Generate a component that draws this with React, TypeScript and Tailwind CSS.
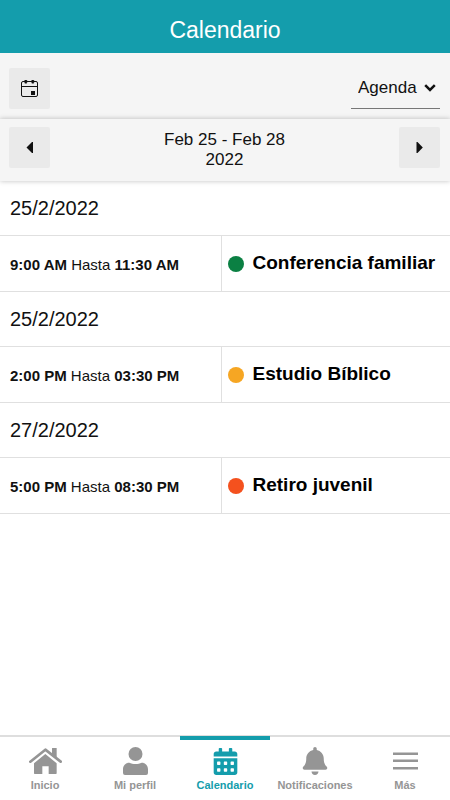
import { useState } from "react";
import { FaBell, FaCalendarAlt } from "react-icons/fa";

interface AgendaEvent {
  date: string;
  start: string;
  end: string;
  title: string;
  dot: string;
}

const EVENTS: AgendaEvent[] = [
  { date: "25/2/2022", start: "9:00 AM", end: "11:30 AM", title: "Conferencia familiar", dot: "bg-[#0b8043]" },
  { date: "25/2/2022", start: "2:00 PM", end: "03:30 PM", title: "Estudio Bíblico",      dot: "bg-[#f6a623]" },
  { date: "27/2/2022", start: "5:00 PM", end: "08:30 PM", title: "Retiro juvenil",       dot: "bg-[#f4511e]" },
];

const NAV_ITEMS = [
  { id: "inicio",         label: "Inicio",         icon: <HomeIcon /> },
  { id: "perfil",         label: "Mi perfil",      icon: <ProfileIcon /> },
  { id: "calendario",     label: "Calendario",     icon: <FaCalendarAlt size={27} /> },
  { id: "notificaciones", label: "Notificaciones", icon: <FaBell size={28} /> },
  { id: "mas",            label: "Más",            icon: <MenuIcon /> },
];

function HomeIcon() {
  return (
    <svg width="33" height="26" viewBox="0 0 99 78" fill="currentColor" aria-hidden="true">
      <path d="M4 41L49 5l46 36" fill="none" stroke="currentColor" strokeWidth="8" strokeLinecap="round" strokeLinejoin="round" />
      <path d="M70 0h13v33L69 22V1z" />
      <path d="M49 18l34 28v30q0 2-2 2H59V55H40v23H17q-2 0-2-2V46z" />
    </svg>
  );
}

function ProfileIcon() {
  return (
    <svg width="25" height="28" viewBox="0 0 75 84" fill="currentColor" aria-hidden="true">
      <circle cx="37.5" cy="21" r="21" />
      <path d="M19 47c10 5 27 5 37 0c12 0 19 9 19 20v11q0 6-6 6H6q-6 0-6-6V67c0-11 7-20 19-20z" />
    </svg>
  );
}

function MenuIcon() {
  return (
    <svg width="25" height="18" viewBox="0 0 25 18" fill="currentColor" aria-hidden="true">
      <rect y="0.5" width="25" height="2.5" />
      <rect y="7.5" width="25" height="2.5" />
      <rect y="15" width="25" height="2.5" />
    </svg>
  );
}

function TodayIcon() {
  return (
    <svg width="17" height="17" viewBox="0 0 17 17" fill="none" stroke="#111" aria-hidden="true">
      <rect x="0.5" y="1.5" width="16" height="15" rx="1.5" />
      <path d="M0.5 6.5h16" />
      <path d="M4.8 0v3.4M11.8 0v3.4" strokeWidth="2" />
      <path d="M3.3 1.5h3M10.3 1.5h3" strokeWidth="2" />
      <rect x="10" y="11" width="4" height="4" fill="#111" stroke="none" />
    </svg>
  );
}

function Arrow({ flipped = false }: { flipped?: boolean }) {
  return (
    <svg width="7" height="11" viewBox="0 0 7 11" fill="#111" aria-hidden="true">
      {flipped ? <path d="M0.5 0H1.5L6.8 5.5L1.5 11H0.5z" /> : <path d="M7 0H6L0.5 5.5L6 11H7z" />}
    </svg>
  );
}

function SquareButton({ label, children }: { label: string; children: React.ReactNode }) {
  return (
    <button type="button" aria-label={label}
      className="flex size-[41px] shrink-0 items-center justify-center rounded-xs bg-[#eaeaea]">
      {children}
    </button>
  );
}

function BottomNav() {
  const [active, setActive] = useState("calendario");

  return (
    <nav className="flex h-[65px] border-t-2 border-[#dedede] bg-white">
      {NAV_ITEMS.map(item => {
        const isActive = item.id === active;
        return (
          <a key={item.id} href={`#${item.id}`} onClick={() => setActive(item.id)}
            className={`relative flex flex-1 flex-col items-center pt-2 text-[11px] leading-4 font-bold ${isActive ? "text-[#149dac]" : "text-[#959595]"}`}>
            {isActive && <span className="absolute inset-x-0 -top-px h-1 bg-[#149dac]" />}
            <span className="flex h-8 items-center">{item.icon}</span>
            <span>{item.label}</span>
          </a>
        );
      })}
    </nav>
  );
}

export default function App() {
  const [view, setView] = useState("Agenda");

  return (
    <div className="flex min-h-screen flex-col bg-white font-['Liberation_Sans',Arial,sans-serif] text-[#111]">
      <header className="flex h-[53px] items-end justify-center bg-[#149dac] pb-2">
        <h1 className="text-[23px] leading-[30px] text-white">Calendario</h1>
      </header>

      {/* Toolbar */}
      <div className="flex h-[66px] items-center justify-between bg-[#f5f5f5] pt-1 pr-2.5 pl-[9px]">
        <SquareButton label="Hoy">
          <TodayIcon />
        </SquareButton>
        <div className="relative border-b border-[#777]">
          <select aria-label="Vista" value={view} onChange={e => setView(e.target.value)}
            className="h-10 w-[89px] appearance-none bg-transparent pl-[7px] text-[17px]">
            <option>Agenda</option>
            <option>Semana</option>
            <option>Mes</option>
          </select>
          <svg width="12" height="8" viewBox="0 0 12 8" fill="none" stroke="#111" strokeWidth="2.5"
            className="pointer-events-none absolute top-4 right-1" aria-hidden="true">
            <path d="M1.2 1.2L6 6l4.8-4.8" />
          </svg>
        </div>
      </div>

      {/* Date range */}
      <div className="relative flex h-[62px] items-start justify-between bg-[#f5f5f5] pt-2 pr-2.5 pl-[9px] shadow-[0_0_5px_rgba(0,0,0,0.25)]">
        <SquareButton label="Anterior">
          <Arrow />
        </SquareButton>
        <p className="pt-[3px] text-center text-[17px] leading-5">
          Feb 25 - Feb 28
          <br />
          2022
        </p>
        <SquareButton label="Siguiente">
          <Arrow flipped />
        </SquareButton>
      </div>

      <main className="flex-1">
        <table className="w-full table-fixed border-separate border-spacing-0 text-left">
          <colgroup>
            <col className="w-[49%]" />
            <col />
          </colgroup>
          {EVENTS.map(event => (
            <tbody key={event.title}>
              <tr>
                <th colSpan={2} scope="rowgroup" className="h-[54px] px-2.5 text-xl font-normal">
                  {event.date}
                </th>
              </tr>
              <tr>
                <td className="h-[57px] border-y border-[#e0e0e0] px-2.5 pt-1 text-[15px]">
                  <b>{event.start}</b> Hasta <b>{event.end}</b>
                </td>
                <td className="h-[57px] border-y border-l border-[#e0e0e0] px-1.5">
                  <div className="flex items-center gap-[9px]">
                    <span className={`size-4 shrink-0 rounded-full ${event.dot}`} />
                    <span className="text-[19px] font-bold text-black">{event.title}</span>
                  </div>
                </td>
              </tr>
            </tbody>
          ))}
        </table>
      </main>

      <BottomNav />
    </div>
  );
}
